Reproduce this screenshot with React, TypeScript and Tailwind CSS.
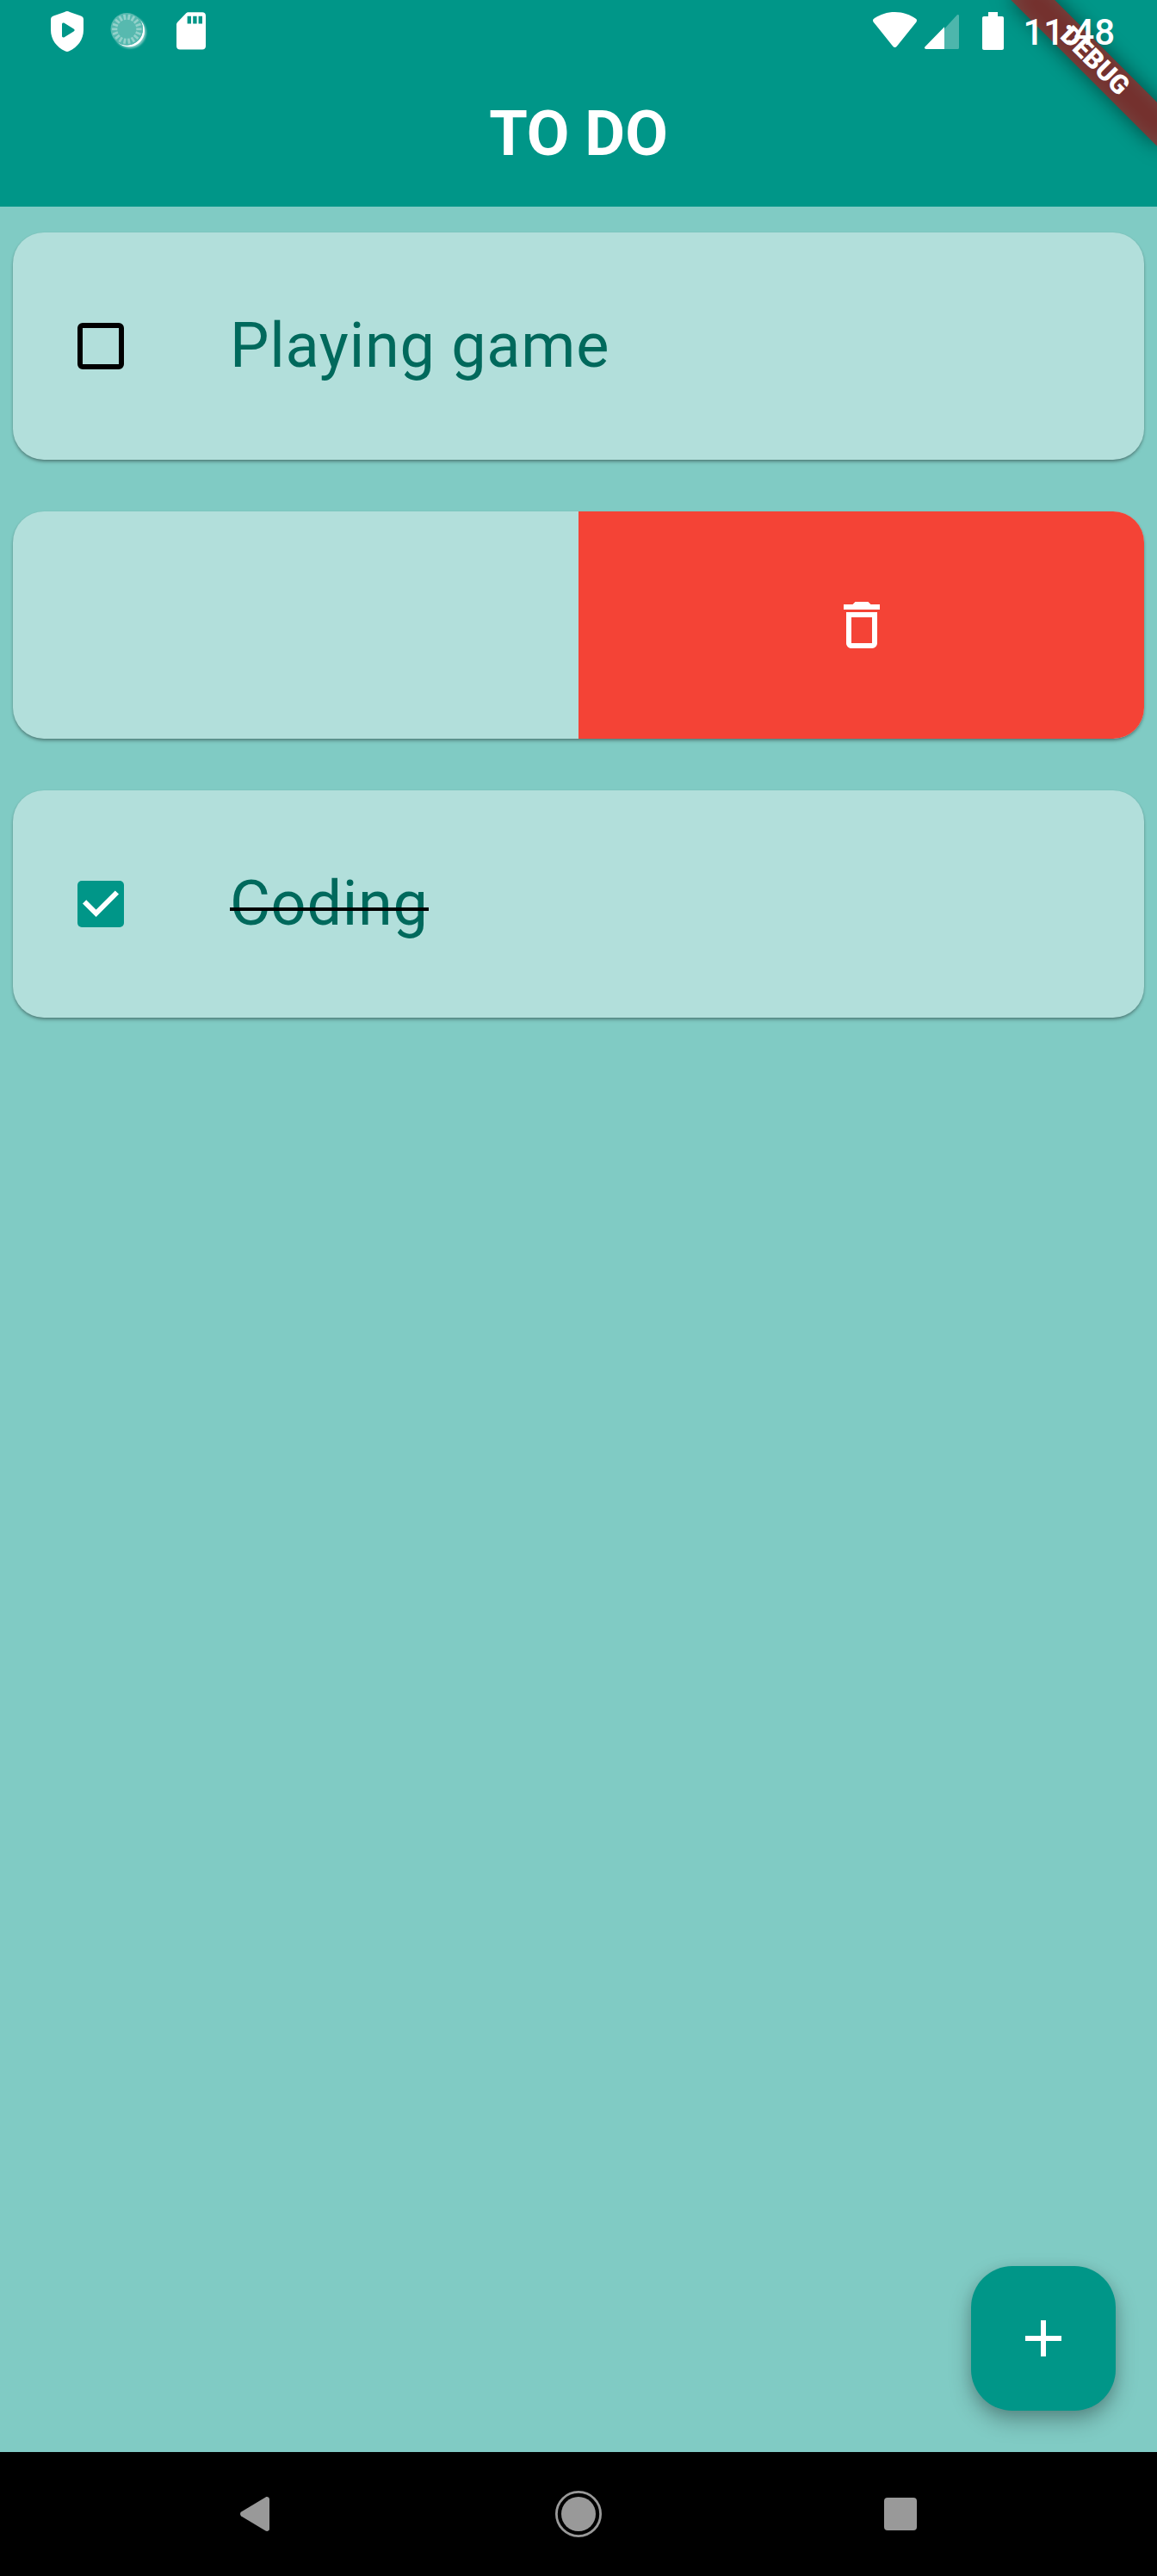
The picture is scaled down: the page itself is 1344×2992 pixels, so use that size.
import type { ReactNode } from "react";

const TICKS = Array.from({ length: 18 }, (_, i) => i * 20);

function ShieldIcon() {
  return (
    <svg className="ml-[59px] h-[47px] w-[38px]" viewBox="0 0 38 47" fill="none">
      <path
        fillRule="evenodd"
        fill="#fff"
        d="M19 0 C20 0 21 .6 22 1 L35 5.6 C37 6.4 38 7.6 38 9.6 V22 C38 33 31 42 21.5 46.3 C19.8 47.2 18.2 47.2 16.5 46.3 C7 42 0 33 0 22 V9.6 C0 7.6 1 6.4 3 5.6 L16 1 C17 .6 18 0 19 0 Z M13 15.2 V28.8 C13 30.3 14.4 31 15.7 30.2 L26.6 23.6 C28 22.7 28 21.3 26.6 20.4 L15.7 13.8 C14.4 13 13 13.7 13 15.2 Z"
      />
    </svg>
  );
}

function SyncIcon() {
  return (
    <svg className="ml-[30px] h-[47px] w-[48px]" viewBox="0 0 48 47" fill="none">
      <defs>
        <filter id="soft" x="-20%" y="-20%" width="140%" height="140%">
          <feGaussianBlur stdDeviation="0.9" />
        </filter>
        <filter id="faint" x="-20%" y="-20%" width="140%" height="140%">
          <feGaussianBlur stdDeviation="0.4" />
        </filter>
        <mask id="crescent">
          <rect width="48" height="47" fill="#fff" />
          <circle cx="20.3" cy="20.8" r="18.6" fill="#000" />
        </mask>
      </defs>
      <g mask="url(#crescent)">
        <circle cx="24" cy="24.4" r="18.8" fill="#fff" opacity=".5" filter="url(#soft)" />
        <circle cx="22.6" cy="22.9" r="18.4" fill="#fff" filter="url(#faint)" />
      </g>
      <circle cx="20.3" cy="20.8" r="18.8" fill="#57b9af" />
      <g filter="url(#faint)">
        {TICKS.map((a) => (
          <line
            key={a}
            x1="20.3"
            y1="3.6"
            x2="20.3"
            y2="9.8"
            stroke="#93d2cb"
            strokeWidth="2.7"
            transform={`rotate(${a + 10} 20.3 20.8)`}
          />
        ))}
      </g>
    </svg>
  );
}

function SdCardIcon() {
  return (
    <svg className="ml-[30px] h-[47px] w-[34px]" viewBox="0 0 34 47">
      <path
        fill="#fff"
        fillRule="evenodd"
        d="M13.5 1.2 H30 C32.4 1.2 34 2.8 34 5.2 V40.4 C34 42.8 32.4 44.4 30 44.4 H4 C1.6 44.4 0 42.8 0 40.4 V15.4 C0 14.3 .4 13.5 1.2 12.7 L11 2.6 C11.8 1.8 12.4 1.2 13.5 1.2 Z M12.6 5.8 V14.6 H17 V5.8 Z M19.2 5.8 V14.6 H23.6 V5.8 Z M25.6 5.8 V14.6 H30 V5.8 Z"
      />
    </svg>
  );
}

function StatusIcons() {
  return (
    <div className="flex h-[47px] items-start">
      <svg className="h-[45px] w-[51px]" viewBox="0 0 51 45">
        <path
          fill="#fff"
          d="M25.5 1 C35 1 43.5 4 50.2 9 C51.2 9.8 51.2 11.4 50.5 12.4 L28 40.4 C26.4 42.4 24.6 42.4 23 40.4 L.5 12.4 C-.2 11.4 -.2 9.8 .8 9 C7.5 4 16 1 25.5 1 Z"
        />
      </svg>
      <svg className="ml-[9px] h-[45px] w-[40px]" viewBox="0 0 40 45">
        <path fill="#4db6ac" d="M23 20.5 L37.2 4.9 C38.4 3.6 40 4 40 5.6 V42.5 C40 43.4 39.4 44 38.5 44 H23 Z" />
        <path fill="#fff" d="M23 18.3 V44 H1.8 C0 44 -.6 42.4 .6 41.2 Z" />
      </svg>
      <svg className="ml-[27px] h-[45px] w-[25px]" viewBox="0 0 25 45">
        <path
          fill="#fff"
          d="M7 1 H18 V6 H23 C24.2 6 25 6.8 25 8 V43 C25 44.2 24.2 45 23 45 H2 C.8 45 0 44.2 0 43 V8 C0 6.8 .8 6 2 6 H7 Z"
        />
      </svg>
    </div>
  );
}

function DebugBanner() {
  return (
    <div className="pointer-events-none absolute top-0 right-0 h-[240px] w-[240px] overflow-hidden">
      <div className="absolute top-0 left-[240px] h-0 w-0 origin-top-left rotate-45">
        <div className="absolute top-[84px] left-[-120px] h-[36px] w-[240px] bg-black/50 blur-[12px]" />
        <div className="absolute top-[84px] left-[-120px] flex h-[36px] w-[240px] items-center justify-center bg-[#b71c1c]/63 pr-[2px] pb-[2px] text-[30.6px] leading-none font-black text-white">
          DEBUG
        </div>
      </div>
    </div>
  );
}

function Checkbox({ checked }: { checked: boolean }) {
  if (!checked) {
    return <div className="ml-[75px] size-[54px] rounded-[6px] border-6 border-black" />;
  }
  return (
    <div className="ml-[75px] size-[54px] rounded-[5px] bg-[#009688]">
      <svg className="size-[54px]" viewBox="0 0 54 54" fill="none">
        <path d="M8.1 24.3 L21.6 37.8 L45.9 13.5" stroke="#fff" strokeWidth="6" />
      </svg>
    </div>
  );
}

function Card({ children }: { children: ReactNode }) {
  return (
    <li className="flex h-[264px] items-center overflow-hidden rounded-[36px] bg-[#b2dfdb] shadow-[0_3px_4px_-1px_rgba(0,0,0,0.35),0_1px_3px_rgba(0,0,0,0.12)]">
      {children}
    </li>
  );
}

function Task({ label, done = false }: { label: string; done?: boolean }) {
  return (
    <Card>
      <Checkbox checked={done} />
      <span className="relative ml-[123px] text-[72px] leading-[84px] tracking-[0.75px] text-[#00695c]">
        {label}
        {done && <span className="absolute top-[46px] left-0 h-[4px] w-full bg-black" />}
      </span>
    </Card>
  );
}

export default function App() {
  return (
    <div className="relative flex h-[2992px] w-[1344px] flex-col overflow-hidden bg-[#80cbc4] font-[Roboto,sans-serif]">
      <DebugBanner />
      <header className="h-[240px] bg-[#009688]">
        <div className="flex h-[72px] items-start pt-[13px]">
          <ShieldIcon />
          <SyncIcon />
          <SdCardIcon />
          <div className="relative z-10 mr-[49px] ml-auto flex items-start">
            <StatusIcons />
            <span className="ml-[22px] text-[42px] leading-[49px] font-medium text-white">11:48</span>
          </div>
        </div>
        <h1 className="mt-[42px] text-center text-[72px] leading-[84px] font-bold text-white">TO DO</h1>
      </header>

      <ul className="flex flex-1 flex-col gap-[60px] px-[15px] pt-[30px]">
        <Task label="Playing game" />
        <Card>
          <button aria-label="Delete" className="ml-auto flex h-full w-[657px] items-center justify-center bg-[#f44336]">
            <svg className="size-[72px]" viewBox="0 0 24 24" fill="#fff">
              <path d="M6 19c0 1.1.9 2 2 2h8c1.1 0 2-.9 2-2V7H6v12zM8 9h8v10H8V9zm7.5-5l-1-1h-5l-1 1H5v2h14V4z" />
            </svg>
          </button>
        </Card>
        <Task label="Coding" done />
      </ul>

      <button
        aria-label="Add"
        className="mr-[48px] mb-[48px] flex size-[168px] items-center justify-center self-end rounded-[48px] bg-[#009688] shadow-[0_12px_26px_rgba(0,0,0,0.28),0_3px_14px_rgba(0,0,0,0.1)]"
      >
        <svg className="size-[72px]" viewBox="0 0 24 24" fill="#fff">
          <path d="M19 13h-6v6h-2v-6H5v-2h6V5h2v6h6v2z" />
        </svg>
      </button>

      <nav className="flex h-[144px] items-center bg-black">
        <svg className="ml-[279px] h-[40px] w-[34px]" viewBox="0 0 34 40" fill="#999">
          <path d="M1.2 17.6 L29.5 .5 C31.5 -.6 34 .6 34 3 V37 C34 39.4 31.5 40.6 29.5 39.5 L1.2 22.4 C-.4 21.2 -.4 18.8 1.2 17.6 Z" />
        </svg>
        <svg className="ml-[332px] size-[54px]" viewBox="0 0 54 54">
          <circle cx="27" cy="27" r="25.6" fill="none" stroke="#999" strokeWidth="2.8" />
          <circle cx="27" cy="27" r="20" fill="#999" />
        </svg>
        <div className="ml-[328px] size-[38px] rounded-[4px] bg-[#999]" />
      </nav>
    </div>
  );
}
